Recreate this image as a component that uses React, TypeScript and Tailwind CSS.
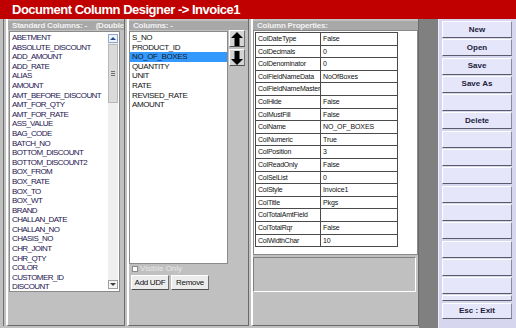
import React from "react";

const standardColumns = [
  "ABETMENT",
  "ABSOLUTE_DISCOUNT",
  "ADD_AMOUNT",
  "ADD_RATE",
  "ALIAS",
  "AMOUNT",
  "AMT_BEFORE_DISCOUNT",
  "AMT_FOR_QTY",
  "AMT_FOR_RATE",
  "ASS_VALUE",
  "BAG_CODE",
  "BATCH_NO",
  "BOTTOM_DISCOUNT",
  "BOTTOM_DISCOUNT2",
  "BOX_FROM",
  "BOX_RATE",
  "BOX_TO",
  "BOX_WT",
  "BRAND",
  "CHALLAN_DATE",
  "CHALLAN_NO",
  "CHASIS_NO",
  "CHR_JOINT",
  "CHR_QTY",
  "COLOR",
  "CUSTOMER_ID",
  "DISCOUNT",
];

const columns = [
  "S_NO",
  "PRODUCT_ID",
  "NO_OF_BOXES",
  "QUANTITY",
  "UNIT",
  "RATE",
  "REVISED_RATE",
  "AMOUNT",
];

const props: [string, string][] = [
  ["ColDateType", "False"],
  ["ColDecimals", "0"],
  ["ColDenominator", "0"],
  ["ColFieldNameData", "NoOfBoxes"],
  ["ColFieldNameMaster", ""],
  ["ColHide", "False"],
  ["ColMustFill", "False"],
  ["ColName", "NO_OF_BOXES"],
  ["ColNumeric", "True"],
  ["ColPosition", "3"],
  ["ColReadOnly", "False"],
  ["ColSelList", "0"],
  ["ColStyle", "Invoice1"],
  ["ColTitle", "Pkgs"],
  ["ColTotalAmtField", ""],
  ["ColTotalRqr", "False"],
  ["ColWidthChar", "10"],
];

const sideButtons = [
  "New",
  "Open",
  "Save",
  "Save As",
  "",
  "Delete",
  "",
  "",
  "",
  "",
  "",
  "",
  "",
  "",
  "",
];

function Arrow({ down }: { down?: boolean }) {
  return (
    <div className="w-[16px] h-[17px] bg-[#d4d4d4] border border-t-white border-l-white border-r-[#707070] border-b-[#505050] flex items-center justify-center">
      <svg width="12" height="14" viewBox="0 0 12 14" className={down ? "rotate-180" : ""}>
        <path d="M6 0 L12 6 L8.5 6 L8.5 14 L3.5 14 L3.5 6 L0 6 Z" fill="#000" />
      </svg>
    </div>
  );
}

function Header({ children }: { children: React.ReactNode }) {
  return (
    <div className="h-[9px] bg-[#a8a8a8] text-[#f2f2f2] text-[8px] font-bold leading-[9px] pl-[4px] whitespace-nowrap overflow-hidden flex tracking-[-0.2px]">
      {children}
    </div>
  );
}

function SideButton({ label, h = "h-[17px]" }: { label: string; h?: string }) {
  return (
    <div
      className={`${h} shrink-0 bg-[#e6e6fa] border border-t-white border-l-white border-r-[#8a8a9a] border-b-[#5a5a6a] text-[8px] font-bold text-[#1c1c3c] flex items-center justify-center`}
    >
      {label}
    </div>
  );
}

export default function App() {
  return (
    <div className="w-[516px] h-[328px] bg-[#c0c0c0] flex flex-col overflow-hidden font-['Liberation_Sans',Arial,sans-serif]">
      <div className="h-[19px] shrink-0 bg-[#c00000] text-white font-bold text-[13px] leading-[19px] pl-[12px] tracking-[-0.5px]">
        Document Column Designer -&gt; Invoice1
      </div>

      <div className="flex flex-1 min-h-0">
        {/* main work area */}
        <div className="flex w-[419px] shrink-0 pl-[2px] pb-[2px] border-l border-[#c0c0c0]">
          <div className="flex w-[416px] gap-[2px] border-l border-[#707070] pl-[2px]">
            {/* standard columns */}
            <div className="w-[119px] flex flex-col border-b border-r border-[#6a6a6a] border-l-2 border-l-white pt-[2px]">
              <Header>
                <span>Standard Columns: -</span>
                <span className="ml-auto">(Double</span>
              </Header>
              <div className="ml-[1px] mt-[1px] w-[111px] h-[261px] bg-white border border-[#8a8a8a] flex">
                <div className="flex-1 pl-[2px] pt-[1px] overflow-hidden">
                  {standardColumns.map((c) => (
                    <div
                      key={c}
                      className="h-[9.6px] text-[8px] leading-[9.6px] text-[#1e1650] tracking-[-0.6px] whitespace-nowrap"
                    >
                      {c}
                    </div>
                  ))}
                </div>
                <div className="w-[10px] mr-[1px] my-[2px] bg-[#efefef] flex flex-col">
                  <div className="h-[9px] bg-[#eef4fc] border border-[#8fa7c8] flex items-center justify-center">
                    <div className="w-0 h-0 border-l-[3px] border-r-[3px] border-b-[3px] border-l-transparent border-r-transparent border-b-[#2a4a8a]" />
                  </div>
                  <div className="h-[59px] bg-[#dadada] border border-[#b8b8b8] flex items-center justify-center mt-[1px]">
                    <div className="flex flex-col gap-[1px]">
                      <div className="w-[4px] h-px bg-[#707070]" />
                      <div className="w-[4px] h-px bg-[#707070]" />
                      <div className="w-[4px] h-px bg-[#707070]" />
                    </div>
                  </div>
                  <div className="flex-1" />
                  <div className="h-[9px] bg-[#f4f4f4] border border-[#a0a0a0] flex items-center justify-center">
                    <div className="w-0 h-0 border-l-[3px] border-r-[3px] border-t-[3px] border-l-transparent border-r-transparent border-t-[#404040]" />
                  </div>
                </div>
              </div>
            </div>

            {/* chosen columns */}
            <div className="w-[122px] flex flex-col border-b border-r border-[#6a6a6a] border-l-2 border-l-white pt-[2px]">
              <Header>Columns: -</Header>
              <div className="flex">
                <div className="mt-[1px] w-[99px] h-[233px] bg-white border border-[#8a8a8a] pt-[1px]">
                  {columns.map((c) => (
                    <div
                      key={c}
                      className={`h-[9.6px] text-[8px] leading-[9.6px] pl-[2px] tracking-[-0.4px] whitespace-nowrap ${
                        c === "NO_OF_BOXES" ? "bg-[#3399ff] text-[#1a1a1a]" : "text-[#111]"
                      }`}
                    >
                      {c}
                    </div>
                  ))}
                </div>
                <div className="flex flex-col gap-[2px] ml-[1px]">
                  <Arrow />
                  <Arrow down />
                </div>
              </div>
              <div className="flex items-center gap-[2px] pl-[3px] mt-[1px] h-[8px]">
                <div className="w-[6px] h-[6px] bg-white border border-[#8a8a8a]" />
                <span className="text-[8px] text-[#e8e8e8] leading-[8px]">Visible Only</span>
              </div>
              <div className="flex gap-[2px] pl-[2px] mt-[2px]">
                <div className="w-[38px] h-[15px] bg-[#ececec] border border-t-white border-l-white border-r-[#707070] border-b-[#505050] text-[8px] text-[#111] flex items-center justify-center tracking-[-0.3px]">
                  Add UDF
                </div>
                <div className="w-[38px] h-[15px] bg-[#ececec] border border-t-white border-l-white border-r-[#707070] border-b-[#505050] text-[8px] text-[#111] flex items-center justify-center tracking-[-0.3px]">
                  Remove
                </div>
              </div>
            </div>

            {/* properties */}
            <div className="w-[168px] flex flex-col border-b border-r border-[#6a6a6a] border-l-2 border-l-white pt-[2px]">
              <Header>Column Properties:</Header>
              <div className="w-[165px] h-[225px] bg-white border border-[#8a8a8a] pl-[1px] pt-[1px]">
                <div className="w-[143px] border-l border-t border-r border-[#4a4a4a]">
                  {props.map(([k, v]) => (
                    <div
                      key={k}
                      className="flex h-[12.6px] border-b border-[#4a4a4a] text-[7px] leading-[12px] text-[#111]"
                    >
                      <div className="w-[65px] pl-[2px] border-r border-[#4a4a4a] tracking-[-0.2px] whitespace-nowrap overflow-hidden">
                        {k}
                      </div>
                      <div className="flex-1 pl-[2px] tracking-[-0.1px] whitespace-nowrap">{v}</div>
                    </div>
                  ))}
                </div>
              </div>
              <div className="mt-[2px] w-[163px] h-[35px] bg-[#c0c0c0] border border-t-[#808080] border-l-[#808080] border-r-white border-b-white" />
            </div>
          </div>
        </div>

        {/* dark strip */}
        <div className="w-[19px] shrink-0 bg-[#808080]" />

        {/* action buttons */}
        <div className="flex-1 bg-[#d6d6ee] flex flex-col pl-[3px] pr-[4px] pt-[2px] gap-[1.3px] border-l border-[#ececfa]">
          {sideButtons.map((b, i) => (
            <SideButton key={i} label={b} />
          ))}
          <SideButton label="" h="h-[6px]" />
          <SideButton label="Esc : Exit" h="h-[16px]" />
        </div>
      </div>
    </div>
  );
}
